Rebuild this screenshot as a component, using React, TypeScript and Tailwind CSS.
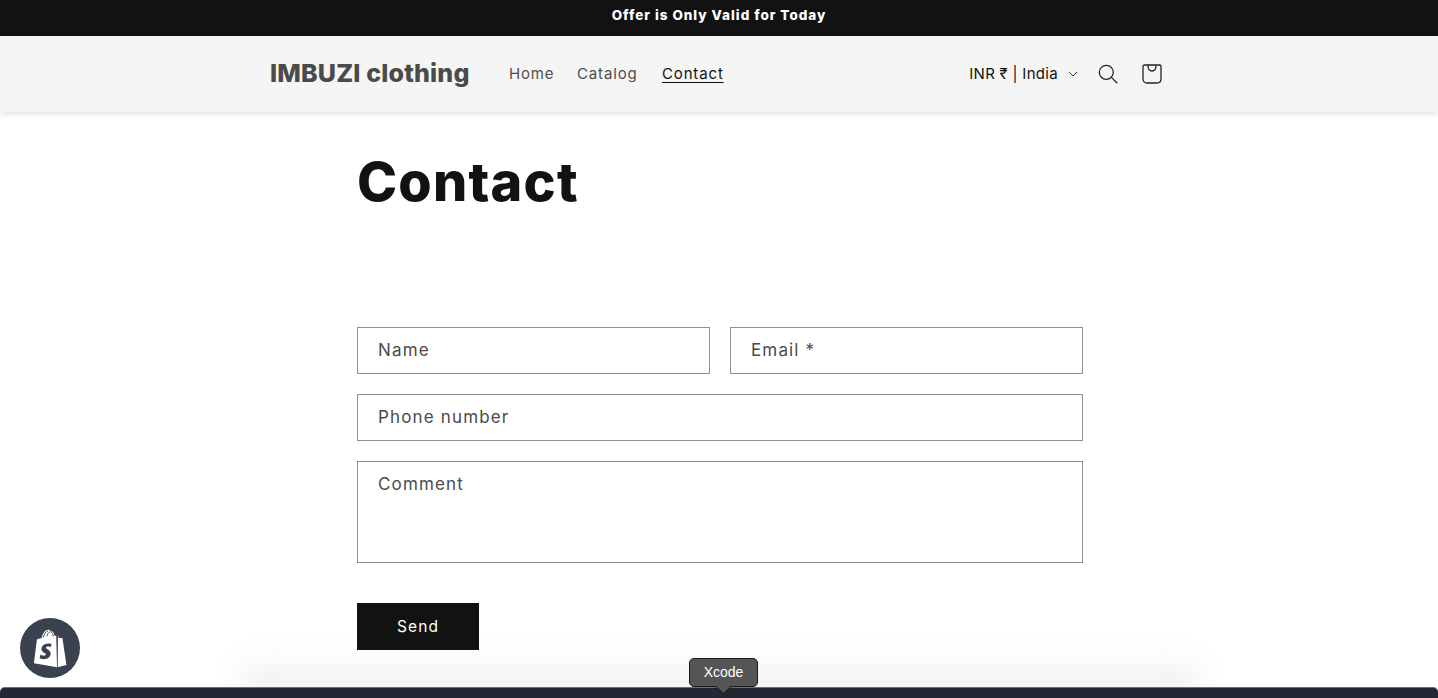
import React from "react";

const font = { fontFamily: '"Inter", "Liberation Sans", sans-serif' };

function Field({ label, className = "" }: { label: string; className?: string }) {
  return (
    <div className={`h-[47px] border border-[#8f8f8f] pl-[20px] flex items-center text-[17px] tracking-[1.15px] text-[#4a4a4a] ${className}`}>
      {label}
    </div>
  );
}

function ShopifyBag() {
  return (
    <svg width="34" height="39" viewBox="0 0 38 42" aria-hidden="true">
      <path d="M26 6.5 L24.2 7 C23.4 3.6 21.7 1.4 19.6 1.2 C18.9 .2 18 0 17.2 0 C13 0 10.6 5 9.8 9.2 L5.6 10.5 C4.4 10.9 4.3 11 4.2 12.2 L1 37.5 L27 42 Z" fill="#fff" />
      <path d="M27.8 6.4 L27.2 42 L37.5 39.5 C37.5 39.5 33 10 33 9.8 C32.9 9.6 32.7 9.4 32.5 9.4 L29 9.2 L27.8 6.4 Z" fill="#fff" />
      <path d="M27 6.3 L27.3 42" stroke="#3a4250" strokeWidth="0.8" fill="none" />
      <path d="M11.5 8.7 C12.3 5 14.3 1.6 17 1.4 M15.5 7.5 C16 5 17.4 2.5 19.6 2.2 C21.5 2.8 22.4 5 22.6 7.4" stroke="#3a4250" strokeWidth="1" fill="none" />
      <path d="M20.8 16.2 C20.8 16.2 19.2 15.4 17.3 15.4 C12.2 15.4 9.4 18.6 9.4 21.7 C9.4 25.3 14.4 25.6 14.4 27.4 C14.4 28.4 13.4 29 12.3 29 C10.3 29 8.4 27.6 8.4 27.6 L7.4 31.6 C7.4 31.6 9.4 33 12.2 33 C16.8 33 19.7 30.1 19.7 26.6 C19.7 22.4 14.6 21.7 14.6 20.1 C14.6 19.5 15.2 18.9 16.9 18.9 C18.3 18.9 19.6 19.5 19.6 19.5 Z" fill="#3a4250" />
    </svg>
  );
}

export default function App() {
  return (
    <div className="relative h-[698px] w-full overflow-hidden bg-white flex flex-col" style={font}>
      <div className="h-[36px] shrink-0 bg-[#121212] pb-[5px] flex items-center justify-center text-white text-[13.5px] font-extrabold tracking-[0.98px]">
        Offer is Only Valid for Today
      </div>

      <header className="relative z-10 h-[76px] shrink-0 bg-[#f5f5f5] shadow-[0_2px_6px_rgba(0,0,0,0.12)] pl-[270px] pr-[276px] flex items-center">
        <div className="text-[25px] font-extrabold text-[#4a4a4a] tracking-[0.17px] whitespace-nowrap w-[239px]">IMBUZI clothing</div>
        <nav className="flex items-center text-[15px] tracking-[0.85px] text-[#4d4d4d]">
          <span className="w-[68px]">Home</span>
          <span className="w-[85px]">Catalog</span>
          <span className="text-[#121212] underline underline-offset-[3px] decoration-[1px]">Contact</span>
        </nav>
        <div className="ml-auto flex items-center text-[#121212]">
          <span className="text-[15px] tracking-[0.3px] whitespace-nowrap">INR ₹ | India</span>
          <svg className="ml-[10px]" width="10" height="6" viewBox="0 0 10 6" fill="none" stroke="#333" strokeWidth="1"><path d="M1 1l4 4 4-4" /></svg>
          <svg className="ml-[20px]" width="20" height="20" viewBox="0 0 20 20" fill="none" stroke="#222" strokeWidth="1.3">
            <circle cx="8.3" cy="8.3" r="7" />
            <path d="M13.4 13.4 L19.3 19.3" />
          </svg>
          <svg className="ml-[24px]" width="20" height="20" viewBox="0 0 20 20" fill="none" stroke="#222" strokeWidth="1.3">
            <path d="M2.2 1 H17.8 C18.5 1 19 1.5 19 2.2 V15 C19 17.4 17.4 19 15 19 H5 C2.6 19 1 17.4 1 15 V2.2 C1 1.5 1.5 1 2.2 1 Z" />
            <path d="M6 1.2 C6 5 7.6 7 10 7 C12.4 7 14 5 14 1.2" />
          </svg>
        </div>
      </header>

      <main className="flex-1 pl-[357px] pr-[355px] flex flex-col">
        <h1 className="mt-[38px] h-[64px] flex items-center text-[54px] font-extrabold text-[#121212] leading-none tracking-[1.2px]">Contact</h1>
        <div className="mt-[113px] flex flex-col gap-[20px]">
          <div className="flex gap-[20px]">
            <Field label="Name" className="flex-1" />
            <Field label="Email *" className="flex-1" />
          </div>
          <Field label="Phone number" />
          <div className="h-[102px] border border-[#8f8f8f] pl-[20px] pt-[10px] text-[17px] tracking-[1.15px] text-[#4a4a4a]">Comment</div>
        </div>
        <button className="relative z-10 mt-[40px] w-[122px] h-[47px] bg-[#121212] text-white text-[15.5px] tracking-[1.1px] flex items-center justify-center">Send</button>
      </main>

      <div className="absolute left-[240px] right-[238px] bottom-[4px] h-[40px] bg-gradient-to-b from-transparent to-[#e9e9e9] blur-[14px]" />

      <div className="relative z-10 h-[11px] shrink-0 bg-[#232733] border-t border-[#6b6f78] rounded-t-[5px]" />

      <div className="absolute z-20 left-[20px] top-[618px] w-[60px] h-[60px] rounded-full bg-[#3a4250] flex items-center justify-center">
        <ShopifyBag />
      </div>

      <div className="absolute z-20 left-[689px] top-[658px] w-[69px] h-[29px] rounded-[5px] bg-[#555555] border border-[#1a1a1a] flex items-center justify-center text-[14px] text-white" style={{ fontFamily: '"Liberation Sans", sans-serif' }}>
        Xcode
      </div>
      <svg className="absolute z-20 left-[715px] top-[686px]" width="17" height="8" viewBox="0 0 17 8" aria-hidden="true">
        <path d="M1 0.5 L8.5 7.5 L16 0.5" fill="#555555" stroke="#1a1a1a" strokeWidth="1" />
        <path d="M2 0 H15 V1 H2 Z" fill="#555555" />
      </svg>
    </div>
  );
}
